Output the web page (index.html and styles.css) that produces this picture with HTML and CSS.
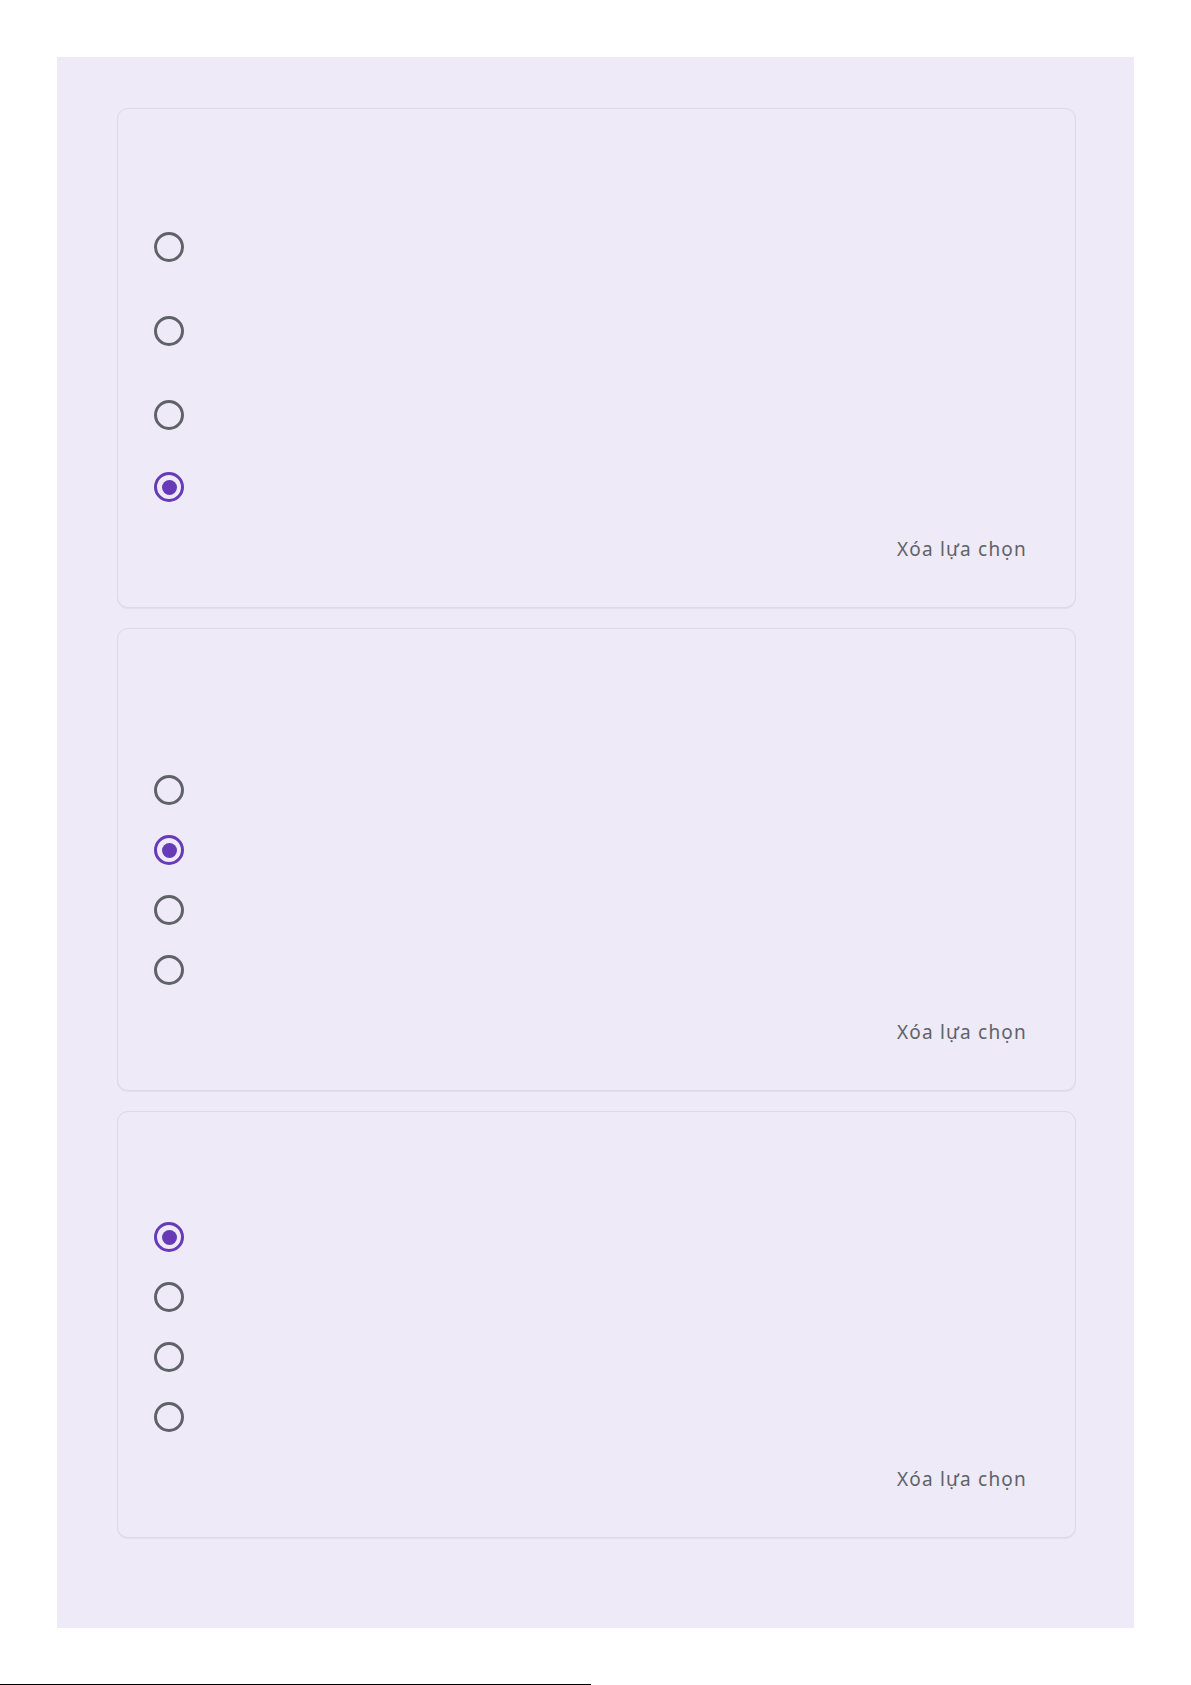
FILE: index.html
```html
<!DOCTYPE html>
<html lang="vi">
<head>
<meta charset="utf-8">
<title>Form</title>
<link rel="stylesheet" href="styles.css">
</head>
<body>
<div class="page">
  <div class="card">
    <div class="card-head card-head--a"></div>
    <div class="options">
      <div class="option option--tall"><span class="radio"></span></div>
      <div class="option option--tall"><span class="radio"></span></div>
      <div class="option option--tall"><span class="radio"></span></div>
      <div class="option"><span class="radio radio--on"></span></div>
    </div>
    <div class="card-foot"><span class="clear">Xóa lựa chọn</span></div>
  </div>

  <div class="card">
    <div class="card-head card-head--b"></div>
    <div class="options">
      <div class="option"><span class="radio"></span></div>
      <div class="option"><span class="radio radio--on"></span></div>
      <div class="option"><span class="radio"></span></div>
      <div class="option"><span class="radio"></span></div>
    </div>
    <div class="card-foot"><span class="clear">Xóa lựa chọn</span></div>
  </div>

  <div class="card">
    <div class="card-head card-head--c"></div>
    <div class="options">
      <div class="option"><span class="radio radio--on"></span></div>
      <div class="option"><span class="radio"></span></div>
      <div class="option"><span class="radio"></span></div>
      <div class="option"><span class="radio"></span></div>
    </div>
    <div class="card-foot"><span class="clear">Xóa lựa chọn</span></div>
  </div>
</div>
<div class="edge-line"></div>
</body>
</html>
```
FILE: styles.css
```css
html, body {
  margin: 0;
  padding: 0;
  background: #ffffff;
}

body {
  font-family: "Noto Sans", "Open Sans", sans-serif;
}

.page {
  margin: 57px 57px 0 57px;
  width: 1077px;
  box-sizing: border-box;
  padding: 51px 58px 90px 60px;
  background: #eeeaf8;
  display: flex;
  flex-direction: column;
  gap: 20px;
}

.card {
  border: 1px solid #dadce0;
  border-radius: 11px;
  background: #eeeaf8;
  box-shadow: 0 1px 1px rgba(0, 0, 0, 0.05);
  display: flex;
  flex-direction: column;
}

.card-head--a { height: 96px; }
.card-head--b { height: 131px; }
.card-head--c { height: 95px; }

.options {
  display: flex;
  flex-direction: column;
}

.option {
  height: 60px;
  display: flex;
  align-items: center;
  padding-left: 37px;
}

.option--tall {
  height: 84px;
}

.radio {
  width: 24px;
  height: 24px;
  border: 3px solid #5f6368;
  border-radius: 50%;
  box-sizing: content-box;
  display: block;
  position: relative;
  margin-left: -1px;
}

.radio--on {
  border-color: #673ab7;
}

.radio--on::after {
  content: "";
  position: absolute;
  left: 4.5px;
  top: 4.5px;
  width: 15px;
  height: 15px;
  border-radius: 50%;
  background: #673ab7;
}

.card-foot {
  margin-top: 20px;
  padding: 0 48px 46px 0;
  display: flex;
  justify-content: flex-end;
}

.clear {
  font-size: 19px;
  line-height: 24px;
  letter-spacing: 1.2px;
  color: #5f6368;
}

.edge-line {
  margin-top: 56px;
  width: 591px;
  height: 1px;
  background: #000000;
}
```
